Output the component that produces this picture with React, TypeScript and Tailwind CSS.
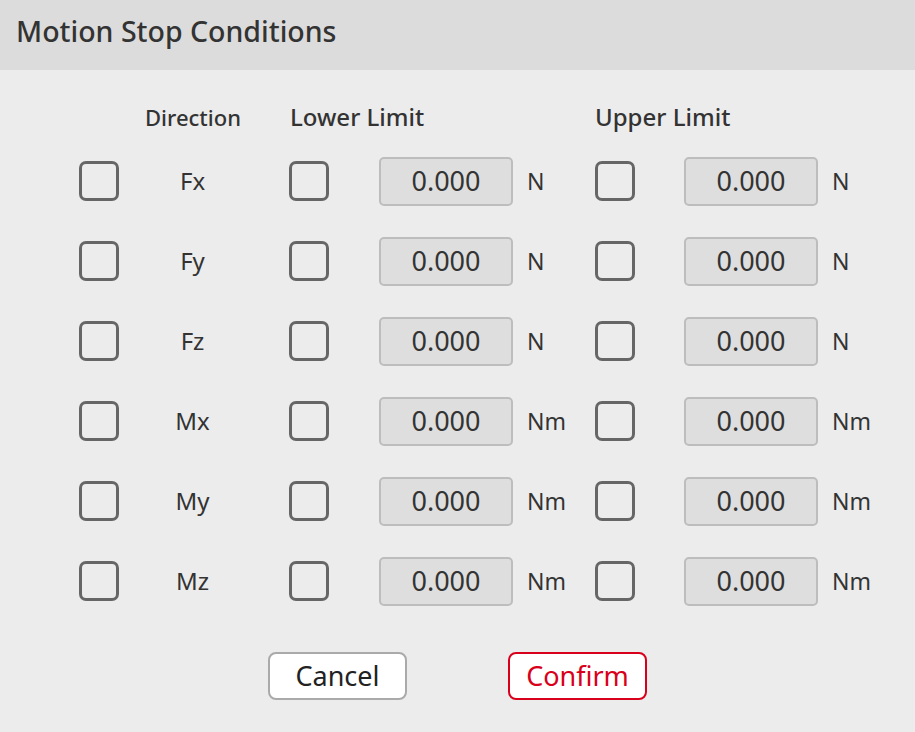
const rows = [
  { dir: "Fx", unit: "N" },
  { dir: "Fy", unit: "N" },
  { dir: "Fz", unit: "N" },
  { dir: "Mx", unit: "Nm" },
  { dir: "My", unit: "Nm" },
  { dir: "Mz", unit: "Nm" },
];

const Box = ({ className = "" }: { className?: string }) => (
  <div
    className={`w-[40px] h-[40px] shrink-0 rounded-[7px] border-[3.5px] border-[#666666] ${className}`}
  />
);

const ValueField = ({ className = "" }: { className?: string }) => (
  <div
    className={`w-[134px] h-[49px] shrink-0 flex items-center justify-center rounded-[5px] border-2 border-[#bdbdbd] bg-[#dedede] text-[27px] text-[#333333] ${className}`}
  >
    0.000
  </div>
);

export default function App() {
  return (
    <div
      className="w-[915px] h-[732px] bg-[#ececec] text-[#333333] overflow-hidden"
      style={{ fontFamily: '"Noto Sans", "Open Sans", sans-serif' }}
    >
      {/* header */}
      <div className="h-[70px] bg-[#dcdcdc] flex items-center pl-[16px] pb-[7px]">
        <h1 className="text-[28.5px] font-medium text-[#333333]">Motion Stop Conditions</h1>
      </div>

      <div className="pt-[23px]">
        {/* column titles */}
        <div className="flex items-center h-[48px]">
          <div className="ml-[120px] w-[146px] text-center text-[22px] font-medium">Direction</div>
          <div className="ml-[24px] w-[305px] text-[24px] font-medium">Lower Limit</div>
          <div className="text-[24px] font-medium">Upper Limit</div>
        </div>

        {/* rows */}
        {rows.map((r) => (
          <div key={r.dir} className="flex items-center h-[80px]">
            <Box className="ml-[79px]" />
            <div className="w-[147px] text-center text-[24px]">{r.dir}</div>
            <Box className="ml-[23px]" />
            <ValueField className="ml-[50px]" />
            <div className="ml-[14px] w-[54px] text-[23px]">{r.unit}</div>
            <Box className="ml-[14px]" />
            <ValueField className="ml-[49px]" />
            <div className="ml-[14px] text-[23px]">{r.unit}</div>
          </div>
        ))}

        {/* buttons */}
        <div className="mt-[31px] flex justify-center gap-[101px]">
          <button className="w-[139px] h-[48px] rounded-[8px] border-2 border-[#aaaaaa] bg-white text-[27px] text-[#222222]">
            Cancel
          </button>
          <button className="w-[139px] h-[48px] rounded-[8px] border-2 border-[#d9001b] bg-white text-[27px] text-[#d9001b]">
            Confirm
          </button>
        </div>
      </div>
    </div>
  );
}
